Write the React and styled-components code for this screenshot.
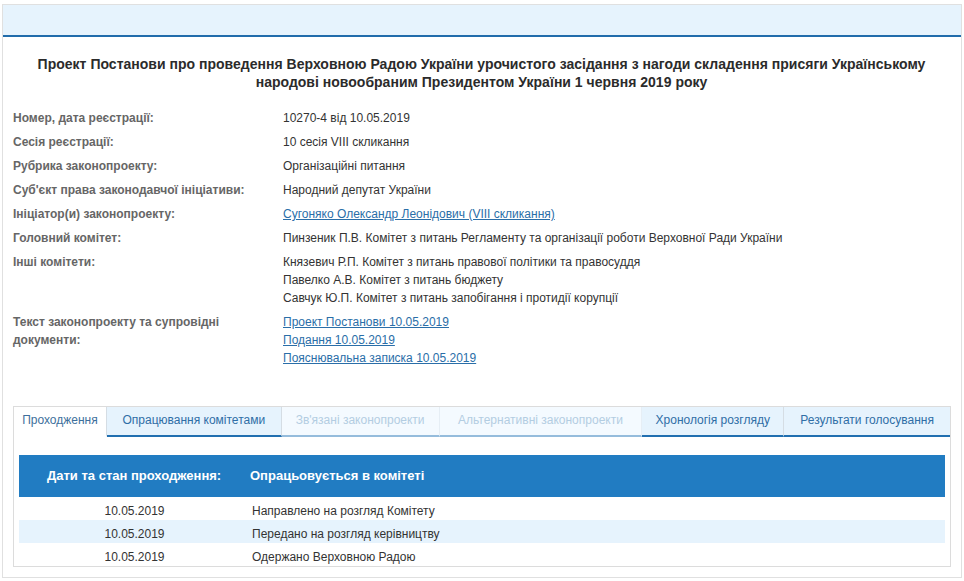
import React from "react";
import styled, { createGlobalStyle } from "styled-components";

const Global = createGlobalStyle`
  html, body { margin: 0; padding: 0; background: #fff; }
  body { font-family: "Liberation Sans", Arial, sans-serif; font-size: 12px; color: #333; }
`;

const Page = styled.div`
  width: 964px;
  height: 581px;
  box-sizing: border-box;
  padding: 4px 2px 3px;
  overflow: hidden;
`;

const Panel = styled.main`
  height: 100%;
  box-sizing: border-box;
  border: 1px solid #e0e0e0;
  display: flex;
  flex-direction: column;
`;

const TopBand = styled.div`
  height: 30px;
  flex: none;
  background: #e6f3fd;
  border-bottom: 2px solid #216cab;
`;

const Body = styled.div`
  padding: 18px 10px 0;
  display: flex;
  flex-direction: column;
`;

const Title = styled.h1`
  margin: 0 15px 18px 14px;
  font-size: 14px;
  line-height: 18px;
  font-weight: 700;
  letter-spacing: 0.015px;
  text-align: center;
  color: #2b2b2b;
`;

const Info = styled.dl`
  margin: 0;
  display: grid;
  grid-template-columns: 270px 1fr;
  row-gap: 6px;
  line-height: 18px;
`;

const Label = styled.dt`
  font-weight: 700;
  color: #666;
`;

const Value = styled.dd`
  margin: 0;
  color: #333;
`;

const Line = styled.div``;

const DocLink = styled.a`
  color: #2a6ea8;
  text-decoration: underline;
`;

const Tabs = styled.section`
  margin: 39px 0 0 0;
  height: 161px;
  box-sizing: border-box;
  border: 1px solid #dcdcdc;
  display: flex;
  flex-direction: column;
  padding: 0 5px;
`;

const TabBar = styled.div`
  display: flex;
  height: 30px;
  flex: none;
  margin: 0 -5px;
`;

const Tab = styled.div`
  box-sizing: border-box;
  width: ${(p) => p.$w}px;
  display: flex;
  align-items: center;
  justify-content: center;
  padding-bottom: 2px;
  background: ${(p) => (p.$active ? "#fff" : p.$disabled ? "#f4faff" : "#e6f3fd")};
  color: ${(p) => (p.$active ? "#3d6f9c" : p.$disabled ? "#b3cde2" : "#2f6ea6")};
  border-right: 1px solid ${(p) => (p.$disabled ? "#e6eef5" : "#d5dde4")};
  border-bottom: 2px solid ${(p) => (p.$active ? "#fff" : p.$disabled ? "#95bcdc" : "#216fb0")};
  &:last-child { border-right: none; }
`;

const HistoryHead = styled.div`
  margin-top: 18px;
  height: 42px;
  box-sizing: border-box;
  padding-bottom: 2px;
  flex: none;
  background: #217cc2;
  color: #fff;
  display: grid;
  grid-template-columns: 231px 1fr;
  align-items: center;
  font-size: 13px;
  font-weight: 700;
`;

const HeadDate = styled.div`
  padding-left: 28px;
`;

const HistoryRow = styled.div`
  display: grid;
  grid-template-columns: 231px 1fr;
  height: 23px;
  box-sizing: border-box;
  padding-top: 5px;
  align-items: center;
  flex: none;
  background: ${(p) => (p.$alt ? "#e6f3fd" : "#fff")};
  color: #333;
`;

const RowDate = styled.div`
  text-align: center;
`;

const RowText = styled.div`
  padding-left: 2px;
`;

const tabs = [
  { t: "Проходження", w: 93, active: true },
  { t: "Опрацювання комітетами", w: 175 },
  { t: "Зв'язані законопроекти", w: 158, disabled: true },
  { t: "Альтернативні законопроекти", w: 203, disabled: true },
  { t: "Хронологія розгляду", w: 142 },
  { t: "Результати голосування", w: 166 },
];

const rows = [
  "Направлено на розгляд Комітету",
  "Передано на розгляд керівництву",
  "Одержано Верховною Радою",
];

export default function App() {
  return (
    <Page>
      <Global />
      <Panel>
        <TopBand />
        <Body>
          <Title>
            Проект Постанови про проведення Верховною Радою України урочистого засідання з нагоди складення присяги Українському народові новообраним Президентом України 1 червня 2019 року
          </Title>
          <Info>
            <Label>Номер, дата реєстрації:</Label>
            <Value>10270-4 від 10.05.2019</Value>
            <Label>Сесія реєстрації:</Label>
            <Value>10 сесія VIII скликання</Value>
            <Label>Рубрика законопроекту:</Label>
            <Value>Організаційні питання</Value>
            <Label>Суб'єкт права законодавчої ініціативи:</Label>
            <Value>Народний депутат України</Value>
            <Label>Ініціатор(и) законопроекту:</Label>
            <Value><DocLink href="#">Сугоняко Олександр Леонідович (VIII скликання)</DocLink></Value>
            <Label>Головний комітет:</Label>
            <Value>Пинзеник П.В. Комітет з питань Регламенту та організації роботи Верховної Ради України</Value>
            <Label>Інші комітети:</Label>
            <Value>
              <Line>Князевич Р.П. Комітет з питань правової політики та правосуддя</Line>
              <Line>Павелко А.В. Комітет з питань бюджету</Line>
              <Line>Савчук Ю.П. Комітет з питань запобігання і протидії корупції</Line>
            </Value>
            <Label>Текст законопроекту та супровідні<br />документи:</Label>
            <Value>
              <Line><DocLink href="#">Проект Постанови 10.05.2019</DocLink></Line>
              <Line><DocLink href="#">Подання 10.05.2019</DocLink></Line>
              <Line><DocLink href="#">Пояснювальна записка 10.05.2019</DocLink></Line>
            </Value>
          </Info>
          <Tabs>
            <TabBar>
              {tabs.map((x) => (
                <Tab key={x.t} $w={x.w} $active={x.active} $disabled={x.disabled}>{x.t}</Tab>
              ))}
            </TabBar>
            <HistoryHead>
              <HeadDate>Дати та стан проходження:</HeadDate>
              <div>Опрацьовується в комітеті</div>
            </HistoryHead>
            {rows.map((r, i) => (
              <HistoryRow key={r} $alt={i === 1}>
                <RowDate>10.05.2019</RowDate>
                <RowText>{r}</RowText>
              </HistoryRow>
            ))}
          </Tabs>
        </Body>
      </Panel>
    </Page>
  );
}
